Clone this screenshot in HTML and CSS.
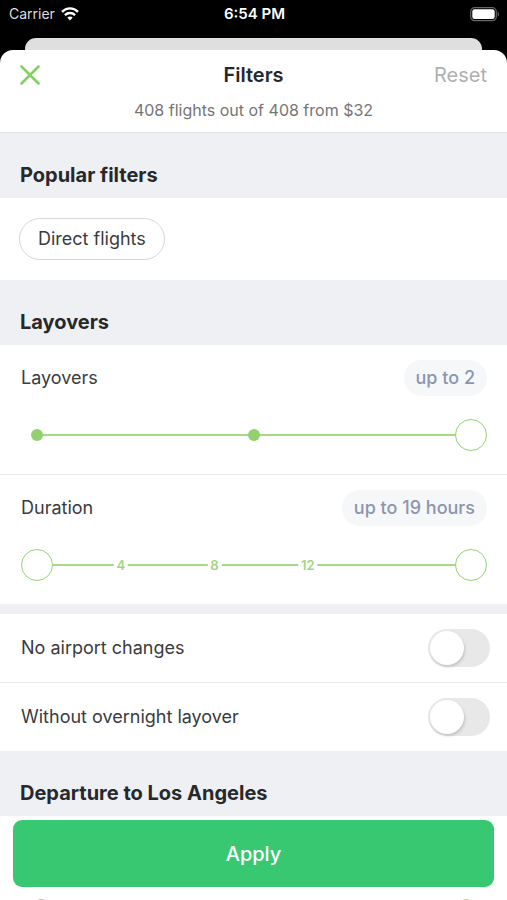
FILE: index.html
```html
<!DOCTYPE html>
<html lang="en">
<head>
<meta charset="utf-8">
<meta name="viewport" content="width=device-width, initial-scale=1">
<title>Filters</title>
<link rel="stylesheet" href="styles.css">
</head>
<body>
<div class="screen">
  <div class="status">
    <div class="status-left">
      <span>Carrier</span>
      <svg width="18" height="14" viewBox="0 0 18 14" fill="none" stroke="#fff" stroke-width="2.3" aria-hidden="true">
        <path d="M1 4.9C5.5.3 12.500.3 17 4.900"/>
        <path d="M3.900 8.100C6.800 5.300 11.200 5.300 14.100 8.100"/>
        <path d="M9 13.500 6.300 10.500C7.800 9.100 10.200 9.100 11.700 10.500Z" fill="#fff" stroke="none"/>
      </svg>
    </div>
    <span class="status-time">6:54 PM</span>
    <div class="status-right">
      <svg width="30" height="15" viewBox="0 0 30 15" aria-hidden="true">
        <rect x=".7" y=".7" width="25.600" height="13" rx="4" fill="none" stroke="#666" stroke-width="1.200"/>
        <rect x="2.300" y="2.300" width="22.400" height="9.800" rx="2.300" fill="#fff"/>
        <path d="M27.700 5v4.500c1.800-.6 1.800-3.900 0-4.500Z" fill="#666"/>
      </svg>
    </div>
  </div>
  <div class="back-card"></div>
  <div class="sheet">
    <header class="header">
      <div class="header-row">
        <button class="close" type="button" aria-label="Close">
          <svg width="20" height="20" viewBox="0 0 20 20" fill="none" stroke="#85d062" stroke-width="2.600" stroke-linecap="round" aria-hidden="true"><path d="M1.500 1.500l17 17M18.500 1.500l-17 17"/></svg>
        </button>
        <h1 class="title">Filters</h1>
        <button class="reset" type="button">Reset</button>
      </div>
      <p class="summary">408 flights out of 408 from $32</p>
    </header>
    <main class="content">
      <h2 class="section-title">Popular filters</h2>
      <div class="chips"><button class="chip" type="button">Direct flights</button></div>

      <h2 class="section-title">Layovers</h2>
      <div class="setting">
        <div class="setting-head">
          <label for="layovers">Layovers</label>
          <output class="pill" for="layovers">up to 2</output>
        </div>
        <div class="slider">
          <div class="track"><i class="dot" style="left:0%"></i><i class="dot" style="left:50%"></i></div>
          <input class="range" id="layovers" type="range" min="0" max="2" value="2">
        </div>
      </div>
      <div class="setting">
        <div class="setting-head">
          <label for="duration-max">Duration</label>
          <output class="pill" for="duration-max">up to 19 hours</output>
        </div>
        <div class="slider">
          <div class="track">
            <span class="mark" style="left:19.300%">4</span>
            <span class="mark" style="left:40.900%">8</span>
            <span class="mark" style="left:62.400%">12</span>
          </div>
          <input class="range" type="range" min="0" max="19" value="0" aria-label="Minimum duration">
          <input class="range" id="duration-max" type="range" min="0" max="19" value="19">
        </div>
      </div>

      <div class="toggles">
        <div class="toggle-row">
          <label for="airport">No airport changes</label>
          <input class="switch" id="airport" type="checkbox" role="switch">
        </div>
        <div class="toggle-row">
          <label for="overnight">Without overnight layover</label>
          <input class="switch" id="overnight" type="checkbox" role="switch">
        </div>
      </div>

      <h2 class="section-title">Departure to Los Angeles</h2>
      <div class="day-range">
        <svg width="14" height="14" viewBox="0 0 14 14" aria-hidden="true"><circle cx="7" cy="7" r="7" fill="#c5c2b8"/></svg>
        <svg width="14" height="14" viewBox="0 0 14 14" aria-hidden="true"><circle cx="7" cy="7" r="7" fill="#d8cf8a"/></svg>
      </div>
    </main>
    <button class="apply" type="button">Apply</button>
  </div>
</div>
</body>
</html>
```
FILE: styles.css
```css
* { box-sizing: border-box; }

body {
  margin: 0;
  background: #000;
  color: #3a3b3d;
  font: 18px/24px Inter, "Liberation Sans", sans-serif;
}

h1, h2, p { margin: 0; }

button {
  padding: 0;
  border: 0;
  background: none;
  color: inherit;
  font: inherit;
  cursor: pointer;
}

.screen {
  display: flex;
  flex-direction: column;
  height: 100vh;
  overflow: hidden;
}

.status {
  display: grid;
  grid-template-columns: 1fr auto 1fr;
  align-items: center;
  height: 38px;
  padding: 0 7px 10px 9px;
  color: #fff;
  font-size: 15px;
}

.status-left {
  display: flex;
  align-items: center;
  gap: 6px;
  color: #dedede;
  font-size: 14px;
}

.status-time { font-weight: 600; }

.status-right {
  display: flex;
  justify-content: flex-end;
}

.back-card {
  height: 12px;
  margin: 0 25px;
  border-radius: 11px 11px 0 0;
  background: #dfdfdf;
}

.sheet {
  position: relative;
  display: flex;
  flex: 1;
  flex-direction: column;
  min-height: 0;
  overflow: hidden;
  border-radius: 13px 13px 0 0;
  background: #fff;
}

.header {
  padding: 13px 20px 12px;
  border-bottom: 1px solid #e3e4e6;
}

.header-row {
  display: grid;
  grid-template-columns: 1fr auto 1fr;
  align-items: center;
}

.close {
  display: flex;
  justify-self: start;
}

.title {
  color: #26272a;
  font-size: 20px;
  line-height: 24px;
  font-weight: 600;
}

.reset {
  justify-self: end;
  color: #b0b0b0;
  font-size: 20px;
}

.summary {
  margin-top: 13px;
  color: #757575;
  font-size: 16px;
  line-height: 20px;
  text-align: center;
}

.content {
  flex: 1;
  min-height: 0;
  overflow-y: auto;
  scrollbar-width: none;
}

.section-title {
  padding: 30px 20px 11px;
  background: #eff0f4;
  color: #27282b;
  font-size: 20px;
  line-height: 24px;
  font-weight: 700;
}

.chips { padding: 20px 19px; }

.chip {
  display: block;
  height: 42px;
  padding: 0 18px;
  border: 1px solid #d5d7d9;
  border-radius: 21px;
}

.setting { padding: 15px 20px 23px 21px; }

.setting + .setting { border-top: 1px solid #e9eaeb; }

.setting-head {
  display: flex;
  align-items: center;
  justify-content: space-between;
}

.pill {
  padding: 6px 12px;
  border-radius: 18px;
  background: #f5f7f9;
  color: #8c95ae;
  font-weight: 500;
}

.slider {
  position: relative;
  display: flex;
  align-items: center;
  height: 32px;
  margin-top: 23px;
}

.track {
  position: relative;
  flex: 1;
  height: 2px;
  margin: 0 16px;
  background: #a5d988;
}

.dot {
  position: absolute;
  top: -5px;
  width: 12px;
  height: 12px;
  margin-left: -6px;
  border-radius: 50%;
  background: #92d16d;
}

.mark {
  position: absolute;
  top: -7px;
  padding: 0 3px;
  background: #fff;
  color: #9fd780;
  font-size: 13px;
  line-height: 16px;
  font-weight: 600;
  transform: translateX(-50%);
}

.range {
  position: absolute;
  inset: 0;
  width: 100%;
  height: 32px;
  margin: 0;
  appearance: none;
  background: none;
  pointer-events: none;
}

.range::-webkit-slider-thumb {
  width: 32px;
  height: 32px;
  appearance: none;
  border: 1px solid #92d470;
  border-radius: 50%;
  background: #fff;
  pointer-events: auto;
}

.toggles { border-top: 10px solid #eff0f4; }

.toggle-row {
  box-sizing: content-box;
  display: flex;
  align-items: center;
  justify-content: space-between;
  min-height: 68px;
  padding: 0 17px 0 21px;
}

.toggle-row + .toggle-row { border-top: 1px solid #e9eaeb; }

.switch {
  width: 62px;
  height: 38px;
  margin: 0;
  padding: 2px;
  appearance: none;
  border-radius: 19px;
  background: #e8e8e8;
}

.switch::before {
  display: block;
  width: 34px;
  height: 34px;
  border-radius: 50%;
  background: #fff;
  box-shadow: 1px 2px 3px rgba(0, 0, 0, .16);
  content: "";
}

.switch:checked { background: #37c871; }

.switch:checked::before { margin-left: auto; }

.day-range {
  display: flex;
  justify-content: space-between;
  padding: 83px 34px 96px;
}

.apply {
  position: absolute;
  right: 13px;
  bottom: 13px;
  left: 13px;
  height: 67px;
  border-radius: 9px;
  background: #37c871;
  color: #fff;
  font-size: 20px;
  font-weight: 500;
}
```
